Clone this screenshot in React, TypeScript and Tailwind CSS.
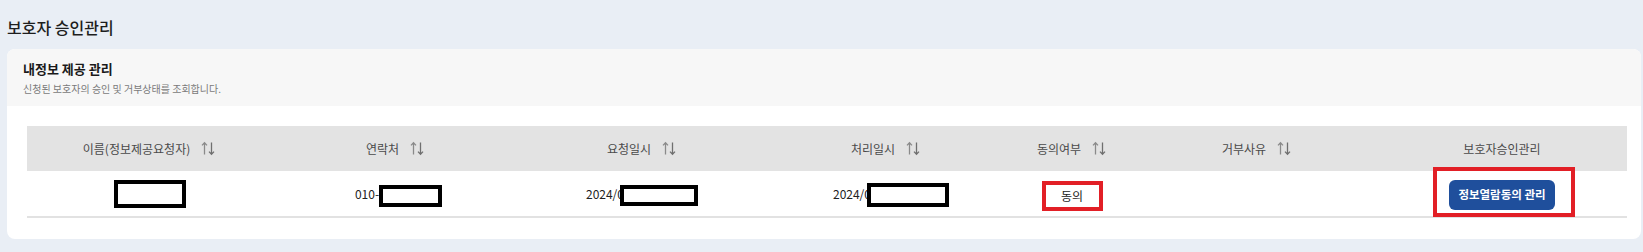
import React from 'react';

// Korean UI text renders with Noto Sans CJK KR; digits fall back to Liberation Sans.
const FONT = '[font-family:"Noto_Sans_CJK_KR","Liberation_Sans",sans-serif]';

type Column = { label: string; width: string; sortable: boolean };

const COLUMNS: Column[] = [
  { label: '이름(정보제공요청자)', width: 'w-[245px]', sortable: true },
  { label: '연락처', width: 'w-[247px]', sortable: true },
  { label: '요청일시', width: 'w-[246px]', sortable: true },
  { label: '처리일시', width: 'w-[242px]', sortable: true },
  { label: '동의여부', width: 'w-[130px]', sortable: true },
  { label: '거부사유', width: 'w-[240px]', sortable: true },
  { label: '보호자승인관리', width: 'w-[250px]', sortable: false },
];

function SortIcon() {
  return (
    <svg width="15" height="15" viewBox="0 0 15 15" fill="none" className="ml-[11px] shrink-0">
      <path d="M3.5 13.5V1.8M1 4.4l2.5-2.6L6 4.4" stroke="#8a8a8a" strokeWidth="1.3" />
      <path d="M10.5 1.5v11.7M8 10.6l2.5 2.6 2.5-2.6" stroke="#6f6f6f" strokeWidth="1.3" />
    </svg>
  );
}

// Black redaction block drawn over private values.
function Redact({ className }: { className: string }) {
  return <span className={`inline-block border-[4px] border-black bg-white ${className}`} />;
}

function Cell({ width, children }: { width: string; children?: React.ReactNode }) {
  return <div className={`${width} flex items-center justify-center`}>{children}</div>;
}

export default function App() {
  return (
    <div className={`min-h-[252px] w-[1643px] overflow-hidden bg-[#e9eef5] ${FONT}`}>
      <div className="h-[49px] pl-[7px] pt-[17px] text-[16px] font-medium leading-[20px] text-[#1e1e1e]">
        보호자 승인관리
      </div>

      <div className="ml-[7px] w-[1634px] overflow-hidden rounded-[8px] bg-white">
        <div className="h-[57px] bg-[#f7f7f7] px-[16px] pt-[11px]">
          <div className="text-[13px] font-bold leading-[18px] text-[#1a1a1a]">내정보 제공 관리</div>
          <div className="mt-[4px] text-[10px] leading-[14px] text-[#7a7a7a]">
            신청된 보호자의 승인 및 거부상태를 조회합니다.
          </div>
        </div>

        <div className="px-[20px] pb-[21px] pt-[20px]">
          <div className="w-[1600px]">
            <div className="flex h-[45px] bg-[#e3e3e3]">
              {COLUMNS.map((c) => (
                <Cell key={c.label} width={c.width}>
                  <span className="text-[12px] text-[#4a4a4a]">{c.label}</span>
                  {c.sortable && <SortIcon />}
                </Cell>
              ))}
            </div>

            <div className="flex h-[47px] border-b-2 border-[#e2e2e2] text-[12px] text-[#222]">
              <Cell width="w-[245px]">
                <Redact className="h-[28px] w-[72px]" />
              </Cell>
              <Cell width="w-[247px]">
                <span className="pl-[6px]">010-</span>
                <Redact className="mt-[5px] h-[22px] w-[63px]" />
              </Cell>
              <Cell width="w-[246px]">
                <span>2024/0</span>
                <Redact className="relative -ml-[4px] mt-[4px] h-[21px] w-[78px]" />
              </Cell>
              <Cell width="w-[242px]">
                <span className="pl-[10px]">2024/0</span>
                <Redact className="relative -ml-[4px] mt-[2px] h-[24px] w-[82px]" />
              </Cell>
              <Cell width="w-[130px]">
                <span className="mt-[5px] inline-flex h-[30px] w-[61px] items-center justify-center border-[4px] border-[#e21f26]">
                  동의
                </span>
              </Cell>
              <Cell width="w-[240px]" />
              <Cell width="w-[250px]">
                <span className="relative mt-[2px] inline-flex">
                  <button
                    type="button"
                    className="flex h-[30px] w-[106px] items-center justify-center rounded-[6px] bg-[#1f4f9c] text-[11.5px] font-bold text-white"
                  >
                    정보열람동의 관리
                  </button>
                  {/* red annotation frame laid over the button */}
                  <span className="pointer-events-none absolute -bottom-[7px] -left-[16px] -right-[20px] -top-[13px] border-[4px] border-[#e21f26]" />
                </span>
              </Cell>
            </div>
          </div>
        </div>
      </div>
    </div>
  );
}
